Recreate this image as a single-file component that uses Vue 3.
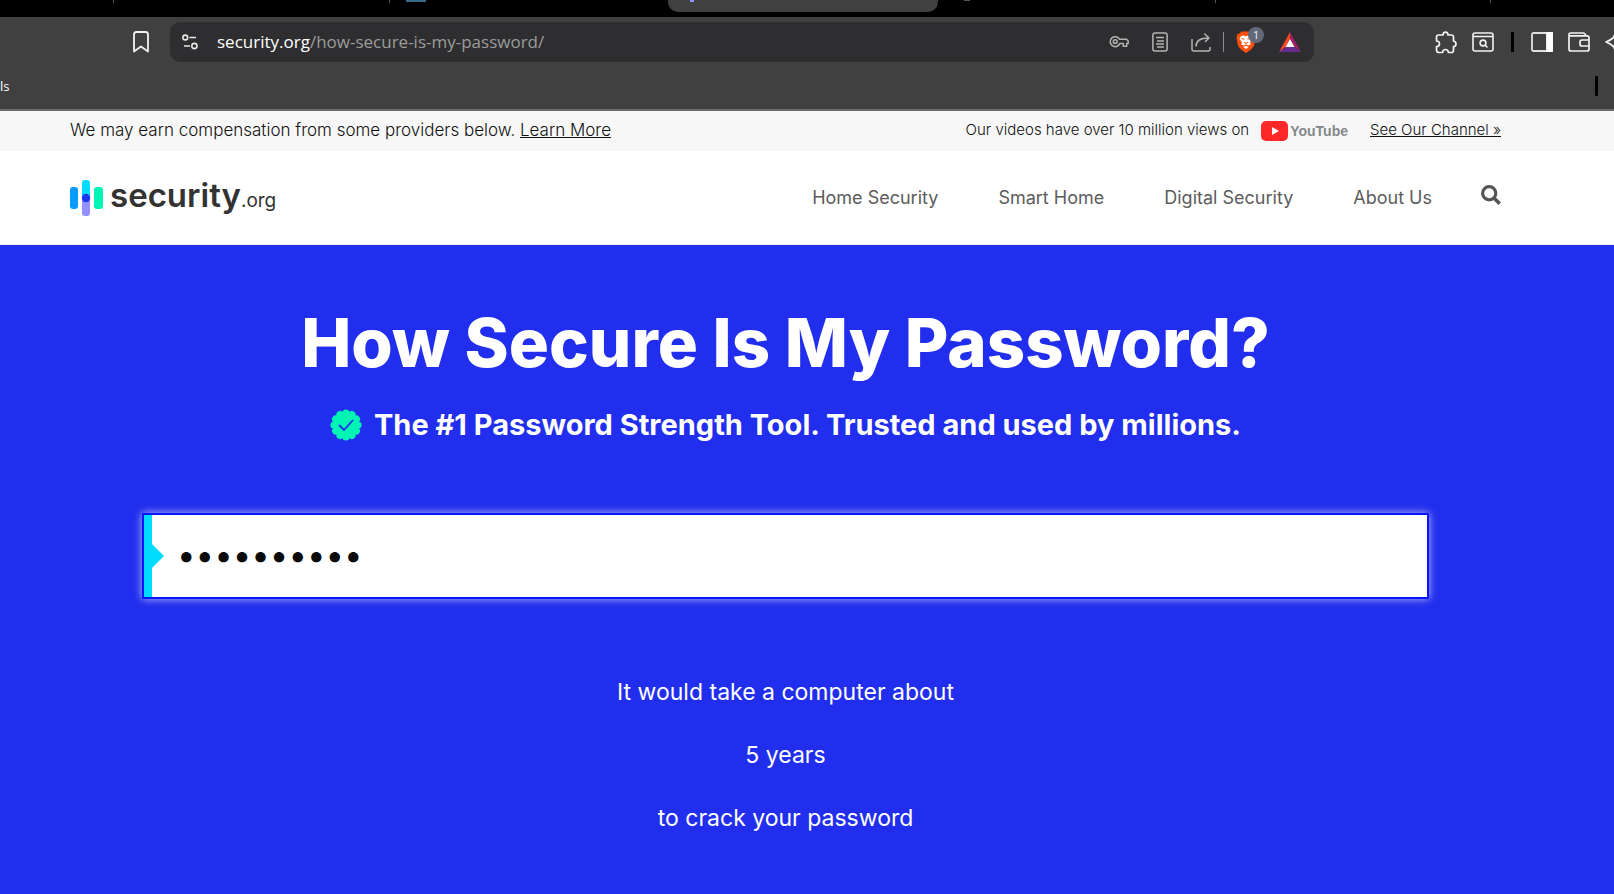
<script setup>
import { ref } from 'vue'

const password = ref('abcdefghij')
const navItems = ['Home Security', 'Smart Home', 'Digital Security', 'About Us']
</script>

<template>
  <div class="window">
    <div class="tabs">
      <i class="sep sep-a"></i>
      <i class="sep sep-b"></i>
      <i class="favicon"></i>
      <div class="active-tab"><i></i></div>
      <i class="tab-dot"></i>
      <i class="sep sep-c"></i>
      <i class="sep sep-d"></i>
    </div>

    <div class="toolbar">
      <button class="tool bookmark" aria-label="Bookmark this page">
        <svg width="18" height="24" viewBox="0 0 18 24" fill="none" stroke="#f2f2f2" stroke-width="1.800" stroke-linejoin="round"><path d="M2 4.500Q2 2 4.500 2H13.500Q16 2 16 4.500V21.500L9 16.500L2 21.500Z" /></svg>
      </button>
      <div class="address">
        <button class="tool" aria-label="Site information">
          <svg width="16" height="18" viewBox="0 0 16 18" fill="none" stroke="#e6e6e6" stroke-width="1.600"><circle cx="3.300" cy="4.500" r="2.400" /><path d="M7.500 4.500H14M2 13H8" /><circle cx="12.400" cy="13" r="2.600" /></svg>
        </button>
        <div class="url"><span>security.org</span>/how-secure-is-my-password/</div>
        <div class="address-tools">
          <button class="tool" aria-label="Passwords">
            <svg width="20" height="16" viewBox="0 0 20 16" fill="none" stroke="#b4b4b4" stroke-width="1.500" stroke-linejoin="round"><path d="M10.600 5.300H17.500L19.200 7V9.500H17.700V12.300H14.300V9.600H10.800A5 5 0 1 1 10.600 5.300Z" /><circle cx="6.200" cy="7.600" r="1.900" /></svg>
          </button>
          <button class="tool" aria-label="Reader mode">
            <svg width="16" height="20" viewBox="0 0 16 20" fill="none" stroke="#b4b4b4" stroke-width="1.500"><rect x="0.900" y="1" width="14.200" height="18" rx="2" /><path d="M4 5.500H12M5 9H12M4 12H12M5 15H12" stroke-width="1.300" /></svg>
          </button>
          <button class="tool" aria-label="Share">
            <svg width="20" height="20" viewBox="0 0 20 20" fill="none" stroke="#b4b4b4" stroke-width="1.500" stroke-linejoin="round"><path d="M1 7V17Q1 19 3 19H17Q19 19 19 17V15M5 14.500Q5 6 17.500 6M13.300 1.500L18 6L14 10" /></svg>
          </button>
          <i class="divider"></i>
          <button class="tool shield" aria-label="Shields">
            <svg width="20" height="24" viewBox="0 0 20 24"><path d="M5.500 1.500H14.500L16.500 3.500L18.500 4L19.500 8L18 15.500Q16.500 19 10 23Q3.500 19 2 15.500L.500 8L1.500 4L3.500 3.500Z" fill="#ff4f0a" /><path d="M5 6L7.500 5.500L10 6.200L12.500 5.500L15 6L16.500 9L14 12.300L14.800 14.500L12 15.500L10 14.300L8 15.500L5.200 14.500L6 12.300L3.500 9ZM7.300 17L10 15.700L12.700 17L10 19Z" fill="#fff" /><path d="M5.500 8.500L8.500 9.200M14.500 8.500L11.500 9.200M8 12.300L10 13.500L12 12.300" stroke="#ff4f0a" stroke-width="1" fill="none" /></svg>
            <span class="badge">1</span>
          </button>
          <button class="tool" aria-label="Rewards">
            <svg width="22" height="20" viewBox="0 0 22 20"><path d="M11 0V7L6.500 15L0 20Z" fill="#ff4724" /><path d="M11 0L22 20L15.500 15L11 7Z" fill="#9e1f63" /><path d="M0 20L6.500 15H15.500L22 20Z" fill="#662d91" /><path d="M11 7L15.500 15H6.500Z" fill="#fff" /></svg>
          </button>
        </div>
      </div>
      <div class="extensions">
        <button class="tool" aria-label="Extensions">
          <svg width="22" height="23" viewBox="0 0 22 23" fill="none" stroke="#f2f2f2" stroke-width="1.700" stroke-linejoin="round"><path d="M3.500 4H8Q8 1.200 10.500 1.200T13 4H16.500Q18.500 4 18.500 6V10Q21 10.500 21 13T18.500 15.500V19Q18.500 21.500 16.500 21.500H13.500Q13 18.500 10.500 18.500T7.500 21.500H4Q1.500 21.500 1.500 19V15.500Q4.500 15.500 4.500 12.800T1.500 10V6Q1.500 4 3.500 4Z" /></svg>
        </button>
        <button class="tool" aria-label="Search tabs">
          <svg width="22" height="20" viewBox="0 0 22 20" fill="none" stroke="#f2f2f2" stroke-width="1.600"><rect x="1" y="1" width="20" height="18" rx="2" /><path d="M1 4.500H21M13 13L15.500 15.500" /><circle cx="11" cy="11" r="2.900" /></svg>
        </button>
        <i class="bar"></i>
        <button class="tool" aria-label="Sidebar">
          <svg width="22" height="20" viewBox="0 0 22 20" fill="none" stroke="#e0e0e0" stroke-width="1.800"><rect x="1" y="1" width="20" height="18" rx="1.500" /><path d="M16 1H21V19H16Z" fill="#fff" stroke="#fff" /></svg>
        </button>
        <button class="tool" aria-label="Wallet">
          <svg width="22" height="20" viewBox="0 0 22 20" fill="none" stroke="#f2f2f2" stroke-width="1.700" stroke-linejoin="round"><path d="M1 4V2.500Q1 1 2.500 1H15Q17 1 18 3.800M1 3.800H19Q21 3.800 21 5.500V17Q21 19 19 19H3Q1 19 1 17V3.800M21 8H14Q12 8 12 10V12Q12 14 14 14H21" /></svg>
        </button>
        <button class="tool" aria-label="Assistant">
          <svg width="24" height="24" viewBox="0 0 24 24" fill="none" stroke="#f2f2f2" stroke-width="1.800" stroke-linejoin="round"><path d="M11 1Q10 5 8 8Q5 10.500 1 12Q5 13.500 8 16Q10 19 11 23Q12 19 14.500 16Q18 13.500 22 12Q18 10.500 14.500 8Q12 5 11 1Z" /></svg>
        </button>
      </div>
    </div>

    <div class="bookmarks">
      <a href="#">ls</a>
      <i class="bar"></i>
    </div>

    <div class="notice">
      <p>We may earn compensation from some providers below. <a href="#">Learn More</a></p>
      <div class="videos">
        <span>Our videos have over 10 million views on</span>
        <span class="youtube">
          <svg width="27" height="20" viewBox="0 0 27 20"><rect width="27" height="20" rx="5" fill="#ff2828" /><path d="M11 6L18 10L11 14Z" fill="#fff" /></svg>
          <b>YouTube</b>
        </span>
        <a href="#">See Our Channel »</a>
      </div>
    </div>

    <header class="site-header">
      <a class="logo" href="#">
        <svg width="34" height="36" viewBox="0 0 34 36"><rect x="0" y="7" width="8" height="22" rx="3" fill="#0a9bff" /><path d="M12 18V3Q12 0 15 0H17Q20 0 20 3V18Z" fill="#00dcff" /><path d="M12 18V33Q12 36 15 36H17Q20 36 20 33V18Z" fill="#9490ff" /><circle cx="16" cy="18" r="4.200" fill="#1f36f0" /><rect x="24" y="7" width="9" height="22" rx="3" fill="#00f5b4" /></svg>
        <span class="word">security<small>.org</small></span>
      </a>
      <nav>
        <a v-for="item in navItems" :key="item" href="#">{{ item }}</a>
        <button class="tool search" aria-label="Search">
          <svg width="20" height="20" viewBox="0 0 20 20" fill="none" stroke="#555"><circle cx="8.200" cy="8.200" r="6.600" stroke-width="3.200" /><path d="M13 13L18.700 18.700" stroke-width="3.600" /></svg>
        </button>
      </nav>
    </header>

    <main>
      <h1>How Secure Is My Password?</h1>
      <h2>
        <svg width="32" height="32" viewBox="-16 -16 32 32">
          <g fill="#00f5b4"><circle r="13.500" /><circle v-for="n in 12" :key="n" r="3.600" cy="-12" :transform="`rotate(${n * 30})`" /></g>
          <path d="M-7 0L-2 5L7 -5" fill="none" stroke="#212eed" stroke-width="1.800" />
        </svg>
        <span>The #1 Password Strength Tool. Trusted and used by millions.</span>
      </h2>
      <div class="field">
        <input v-model="password" type="password" aria-label="Password" autocomplete="off" />
      </div>
      <div class="result">
        <p>It would take a computer about</p>
        <p>5 years</p>
        <p>to crack your password</p>
      </div>
    </main>
  </div>
</template>

<style>
body {
  margin: 0;
  overflow: hidden;
}
</style>

<style scoped>
.window {
  display: flex;
  flex-direction: column;
  min-height: 100vh;
  font-family: Inter, "Liberation Sans", sans-serif;
  color: #111;
  overflow: hidden;
}
a {
  color: inherit;
}
p, h1, h2 {
  margin: 0;
}
svg {
  display: block;
  flex: none;
}
.tool {
  display: flex;
  flex: none;
  padding: 0;
  border: 0;
  background: none;
}
.tabs {
  position: relative;
  height: 17px;
  background: #000;
}
.tabs > * {
  position: absolute;
  top: 0;
}
.sep {
  width: 1px;
  height: 3px;
  background: #555;
}
.sep-a { left: 113px; }
.sep-b { left: 389px; }
.sep-c { left: 1215px; }
.sep-d { left: 1490px; }
.favicon {
  left: 406px;
  width: 20px;
  height: 2px;
  background: #356c89;
}
.active-tab {
  left: 668px;
  width: 270px;
  height: 12px;
  border-radius: 0 0 10px 10px;
  background: #404040;
}
.active-tab i {
  display: block;
  width: 4px;
  height: 2px;
  margin-left: 22px;
  background: #9490ff;
}
.tab-dot {
  left: 964px;
  width: 6px;
  height: 1px;
  background: #555;
}
.toolbar {
  display: flex;
  align-items: center;
  height: 50px;
  padding-left: 132px;
  background: #404040;
}
.address {
  display: flex;
  flex: 1;
  align-items: center;
  height: 40px;
  margin-left: 20px;
  padding: 0 13px 0 12px;
  border-radius: 10px;
  background: #2e2e30;
}
.url {
  flex: 1;
  margin-left: 19px;
  font: 17px/24px "Open Sans", sans-serif;
  color: #9c9c9c;
}
.url span {
  color: #fff;
}
.address-tools {
  display: flex;
  align-items: center;
  gap: 23px;
}
.divider {
  width: 1px;
  height: 20px;
  margin: 0 -11px;
  background: #8c8c8c;
}
.shield {
  position: relative;
}
.badge {
  position: absolute;
  top: -3px;
  left: 12px;
  width: 16px;
  border-radius: 8px;
  background: #63687b;
  color: #fff;
  font: 10px/16px "Open Sans", sans-serif;
  text-align: center;
}
.extensions {
  display: flex;
  align-items: center;
  gap: 15px;
  margin: 0 -15px 0 121px;
}
.bar {
  width: 3px;
  height: 20px;
  border-radius: 1px;
  background: #000;
}
.extensions .bar {
  margin: 0 2px;
}
.bookmarks {
  box-sizing: border-box;
  display: flex;
  align-items: center;
  justify-content: space-between;
  height: 44px;
  padding: 0 16px 4px 0;
  border-bottom: 2px solid #6c6c6c;
  background: #404040;
}
.bookmarks a {
  color: #fff;
  font: 13px/20px "Open Sans", sans-serif;
  text-decoration: none;
}
.notice,
.site-header {
  display: flex;
  align-items: center;
  justify-content: space-between;
  padding: 0 113px 0 70px;
}
.notice {
  height: 40px;
  background: #f7f7f7;
  font-size: 17px;
  font-weight: 300;
  line-height: 24px;
}
.notice p,
.videos > span:first-child,
.videos > a {
  padding-bottom: 3px;
}
.videos,
.youtube,
.logo,
nav {
  display: flex;
  align-items: center;
}
.videos {
  font-size: 15px;
}
.youtube {
  gap: 2px;
  margin: 0 22px 0 12px;
  color: #85888b;
  font: 14px/20px "Liberation Sans", sans-serif;
}
.site-header {
  height: 93px;
  border-bottom: 1px solid #eee;
  background: #fff;
}
.logo {
  gap: 6px;
  color: #333;
  text-decoration: none;
}
.word {
  font: 600 33px/40px Inter, sans-serif;
}
.word small {
  font-size: 19px;
  font-weight: 400;
}
nav {
  gap: 60px;
}
nav a {
  color: #5c5c5c;
  font-size: 18px;
  line-height: 24px;
  font-weight: 400;
  text-decoration: none;
}
.search {
  margin-left: -11px;
  padding-bottom: 6px;
}
main {
  flex: 1;
  padding: 64px 185px 0 142px;
  background: #212eed;
  color: #fff;
  text-align: center;
}
h1 {
  font-size: 67px;
  font-weight: 800;
  line-height: 68px;
}
h2 {
  display: flex;
  align-items: center;
  justify-content: center;
  gap: 12px;
  margin-top: 28px;
  font-size: 29px;
  font-weight: 700;
  line-height: 40px;
}
.field {
  position: relative;
  margin-top: 68px;
}
.field::after {
  content: "";
  position: absolute;
  top: 31px;
  left: 10px;
  border: 12px solid transparent;
  border-right-width: 0;
  border-left-color: #00dcff;
}
.field input {
  display: block;
  box-sizing: border-box;
  width: 100%;
  height: 86px;
  padding: 0 28px 2px 33px;
  border: 2px solid #0a14ff;
  border-radius: 0;
  outline: 0;
  background: linear-gradient(#00dcff, #00dcff) left / 8px 100% no-repeat #fff;
  box-shadow: 0 0 8px #ffffffb0;
  color: #0a0a0a;
  font: 33px/40px Inter, sans-serif;
}
.result {
  display: grid;
  gap: 39px;
  margin-top: 81px;
  font-size: 23px;
  line-height: 24px;
}
</style>
